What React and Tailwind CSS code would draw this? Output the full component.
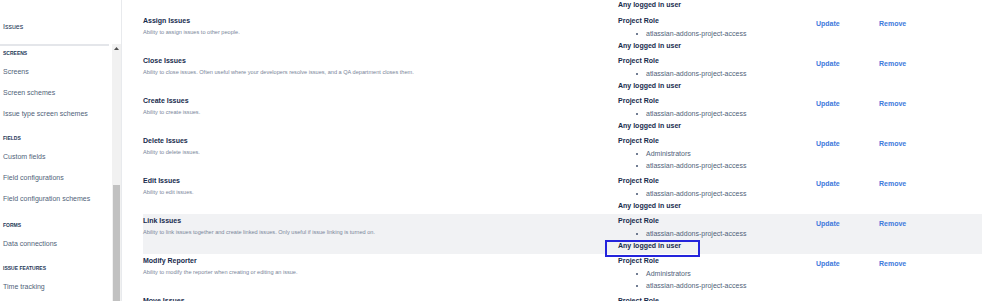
import React from "react";

const rows = [
  {
    title: "Assign Issues",
    desc: "Ability to assign issues to other people.",
    items: ["atlassian-addons-project-access"],
    any: true,
  },
  {
    title: "Close Issues",
    desc: "Ability to close issues. Often useful where your developers resolve issues, and a QA department closes them.",
    items: ["atlassian-addons-project-access"],
    any: true,
  },
  {
    title: "Create Issues",
    desc: "Ability to create issues.",
    items: ["atlassian-addons-project-access"],
    any: true,
  },
  {
    title: "Delete Issues",
    desc: "Ability to delete issues.",
    items: ["Administrators", "atlassian-addons-project-access"],
    any: false,
  },
  {
    title: "Edit Issues",
    desc: "Ability to edit issues.",
    items: ["atlassian-addons-project-access"],
    any: true,
  },
  {
    title: "Link Issues",
    desc: "Ability to link issues together and create linked issues. Only useful if issue linking is turned on.",
    items: ["atlassian-addons-project-access"],
    any: true,
    hl: true,
  },
  {
    title: "Modify Reporter",
    desc: "Ability to modify the reporter when creating or editing an issue.",
    items: ["Administrators", "atlassian-addons-project-access"],
    any: false,
  },
  {
    title: "Move Issues",
    desc: "Ability to move issues between projects or between workflows of the same project (if applicable).",
    items: ["atlassian-addons-project-access"],
    any: true,
  },
];

const sections = [
  {
    heading: "SCREENS",
    cls: "mt-[2px]",
    items: ["Screens", "Screen schemes", "Issue type screen schemes"],
  },
  {
    heading: "FIELDS",
    cls: "mt-[9px]",
    items: ["Custom fields", "Field configurations", "Field configuration schemes"],
  },
  { heading: "FORMS", cls: "mt-[11px]", items: ["Data connections"] },
  { heading: "ISSUE FEATURES", cls: "mt-[9px]", items: ["Time tracking"] },
];

function Row({ r }) {
  return (
    <div
      className={
        r.hl
          ? "grid grid-cols-[475px_198px_63px_1fr] h-[40px] bg-[#f1f2f4]"
          : "grid grid-cols-[475px_198px_63px_1fr] h-[40px]"
      }
    >
      <div className="pt-[2px]">
        <div className="text-[7px] leading-[10px] font-bold text-[#172b4d]">{r.title}</div>
        <div className="text-[5.6px] leading-[12px] text-[#7a869a]">{r.desc}</div>
      </div>
      <div className="pt-[1px] text-[7px] leading-[12.5px]">
        <div className="font-bold text-[#172b4d]">Project Role</div>
        {r.items.map((it) => (
          <div key={it} className="flex items-center pl-[18px] text-[#505f79]">
            <span className="w-[2px] h-[2px] rounded-full bg-[#42526e]"></span>
            <span className="ml-[8px]">{it}</span>
          </div>
        ))}
        {r.any && (
          <div className="font-bold text-[#172b4d]">
            <span className="relative">
              Any logged in user
              {r.hl && (
                <span className="absolute left-[-13px] top-[-2.5px] w-[95px] h-[17px] border-2 border-[#2424dc]"></span>
              )}
            </span>
          </div>
        )}
      </div>
      <div className="pt-[4px] text-[7px] leading-[12px] font-bold text-[#4079dc]">Update</div>
      <div className="pt-[4px] text-[7px] leading-[12px] font-bold text-[#4079dc]">Remove</div>
    </div>
  );
}

export default function App() {
  return (
    <div
      className="flex h-[301px] w-[999px] overflow-hidden bg-white"
      style={{ fontFamily: '"Liberation Sans", Arial, sans-serif' }}
    >
      {/* Sidebar */}
      <div className="flex flex-col w-[122px] shrink-0 border-r border-[#e8eaed]">
        <div className="h-[44px] pl-[3px] pt-[21px] text-[7px] leading-[12px] text-[#253858]">
          Issues
        </div>
        <div className="flex flex-1 min-h-0">
          <div className="w-[112px] flex flex-col">
            <div className="h-[2px] w-[109px] bg-[#e4e6ea]"></div>
            {sections.map((s) => (
              <div key={s.heading} className={s.cls}>
                <div className="pl-[3px] h-[10px] leading-[10px] text-[5px] font-bold text-[#253858] mb-[3px]">
                  {s.heading}
                </div>
                {s.items.map((it) => (
                  <div key={it} className="pl-[3px] h-[21px] leading-[21px] text-[7px] text-[#505f79]">
                    {it}
                  </div>
                ))}
              </div>
            ))}
          </div>
          <div className="w-[9px] flex flex-col bg-[#f1f1f1]">
            <div className="h-[141px] flex justify-center pt-[3px]">
              <svg width="5" height="3" viewBox="0 0 5 3">
                <polygon points="2.5,0 5,3 0,3" fill="#505050" />
              </svg>
            </div>
            <div className="flex-1 mx-[1px] bg-[#c1c1c1]"></div>
          </div>
        </div>
      </div>

      {/* Main */}
      <div className="flex-1 min-w-0 overflow-hidden pl-[21px] pt-[1px]">
        <div className="w-[839px]">
          <div className="grid grid-cols-[475px_198px_63px_1fr] h-[13px]">
            <div></div>
            <div className="-mt-[2px] text-[7px] leading-[12.5px] font-bold text-[#172b4d]">
              Any logged in user
            </div>
          </div>
          {rows.map((r) => (
            <Row key={r.title} r={r} />
          ))}
        </div>
      </div>
    </div>
  );
}
